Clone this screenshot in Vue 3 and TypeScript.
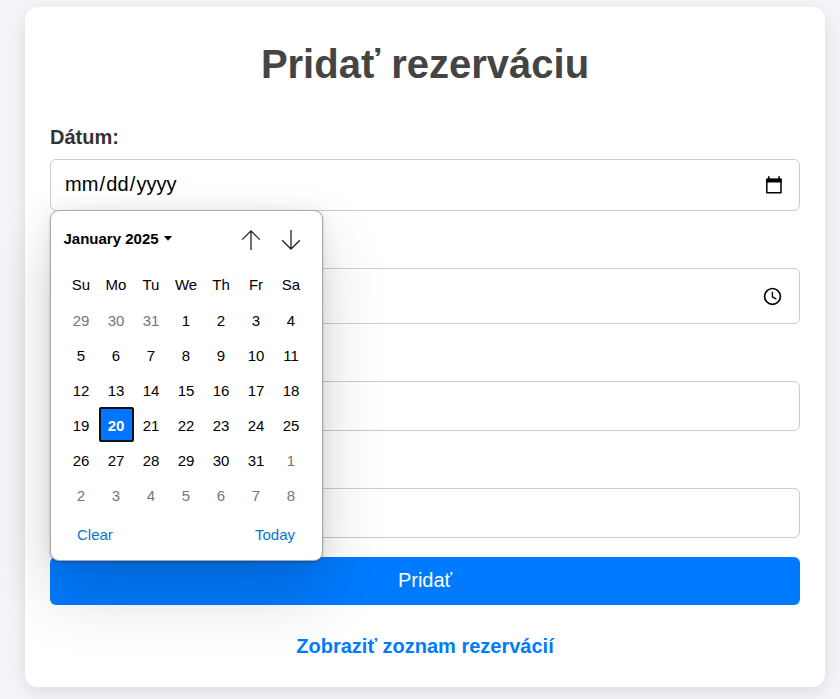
<script setup lang="ts">
interface Day {
  label: number
  muted: boolean
  selected: boolean
}

const weekdays: string[] = ['Su', 'Mo', 'Tu', 'We', 'Th', 'Fr', 'Sa']

// Six weeks, starting on Sunday 29 December 2024
const days: Day[] = Array.from({ length: 42 }, (_, i) => {
  const date = new Date(2024, 11, 29 + i)
  const inMonth = date.getMonth() === 0
  return {
    label: date.getDate(),
    muted: !inMonth,
    selected: inMonth && date.getDate() === 20,
  }
})
</script>

<template>
  <div class="page">
    <main class="card">
      <h1 class="title">Pridať rezerváciu</h1>

      <form class="form" @submit.prevent>
        <label class="label">Dátum:</label>
        <div class="field date">
          <span class="value"><i>mm</i><i>/</i><i>dd</i><i>/</i><i>yyyy</i></span>
          <svg class="icon" width="20" height="20" viewBox="0 0 20 20">
            <path d="M2.8 4.4h14.2v13.4H2.8z" fill="none" stroke="#000" stroke-width="1.5" stroke-linejoin="round" />
            <path d="M2.1 3.4h15.6v4H2.1zM4 1.2h1.6v2.4H4zM14.3 1.2h1.6v2.4h-1.6z" fill="#000" />
          </svg>

          <div class="popup">
            <div class="popup-head">
              <span class="month">January 2025</span>
              <svg class="caret" width="8" height="5" viewBox="0 0 8 5"><path d="M0 0h8L4 4.8z" /></svg>
              <svg class="arrow" width="20" height="22" viewBox="0 0 20 22">
                <path d="M10 21V1.8M1.2 10.6L10 1.8l8.8 8.8" />
              </svg>
              <svg class="arrow" width="20" height="22" viewBox="0 0 20 22">
                <path d="M10 1v19M1.2 11.2l8.8 8.8 8.8-8.8" />
              </svg>
            </div>
            <div class="grid weekdays">
              <span v-for="name in weekdays" :key="name" class="cell">{{ name }}</span>
            </div>
            <div class="grid">
              <span
                v-for="(day, i) in days"
                :key="i"
                class="cell"
                :class="{ muted: day.muted, selected: day.selected }"
              >{{ day.label }}</span>
            </div>
            <div class="popup-foot">
              <span>Clear</span>
              <span>Today</span>
            </div>
          </div>
        </div>

        <div class="field time">
          <svg class="icon clock" width="20" height="20" viewBox="0 0 20 20">
            <circle cx="9.5" cy="10.4" r="7.9" fill="none" stroke="#000" stroke-width="1.7" />
            <path d="M9.4 5.8v5l4 2.4" fill="none" stroke="#000" stroke-width="1.4" />
          </svg>
        </div>
        <div class="field text"></div>
        <div class="field text last"></div>
        <button class="submit" type="submit">Pridať</button>
      </form>

      <a class="link">Zobraziť zoznam rezervácií</a>
    </main>
  </div>
</template>

<style>
body {
  background: #f4f4f9;
}
</style>

<style scoped>
.page {
  box-sizing: border-box;
  height: 699px;
  padding: 7px 0 0 25px;
  overflow: hidden;
  background: #f4f4f9;
}
.card {
  box-sizing: border-box;
  width: 800px;
  height: 680px;
  padding: 34px 25px 0;
  display: flex;
  flex-direction: column;
  background: #fff;
  border-radius: 12.5px;
  box-shadow: 0 5px 19px rgba(0, 0, 0, 0.1);
  color: #333;
  font-family: "Liberation Sans", Arial, sans-serif;
  font-size: 20px;
}
.title {
  margin: 0;
  text-align: center;
  font-size: 40px;
  line-height: 46px;
  color: #444;
}
.form {
  display: flex;
  flex-direction: column;
  margin-top: 39px;
}
.label {
  font-weight: bold;
  line-height: 23px;
  height: 23px;
}
.field {
  box-sizing: border-box;
  display: flex;
  align-items: center;
  justify-content: space-between;
  padding: 0 15px 0 13px;
  border: 1px solid #ccc;
  border-radius: 6px;
  background: #fff;
}
.date {
  position: relative;
  height: 52px;
  margin-top: 10px;
  color: #000;
}
.value {
  display: flex;
  line-height: 23px;
  margin-bottom: 1px;
}
.value i {
  font-style: normal;
  padding: 0 1px;
}
.value i:nth-child(even) {
  padding: 0 0.2px;
}
.time {
  height: 56px;
  margin-top: 57px;
  justify-content: flex-end;
  padding-right: 16px;
}
.text {
  height: 50px;
  margin-top: 57px;
}
.submit {
  height: 48px;
  margin-top: 19px;
  padding: 0 0 2px;
  border: 0;
  border-radius: 6px;
  background: #007bff;
  color: #fff;
  font: inherit;
}
.link {
  margin-top: 30px;
  line-height: 23px;
  text-align: center;
  font-weight: bold;
  color: #007bff;
}
.popup {
  position: absolute;
  z-index: 1;
  top: 50px;
  left: -1px;
  box-sizing: border-box;
  width: 272.5px;
  height: 351px;
  border: 1px solid #aaa;
  border-radius: 9px;
  background: #fff;
  box-shadow: 0 1px 2px rgba(0, 0, 0, 0.25), 0 0 20px rgba(0, 0, 0, 0.08), 0 32px 64px rgba(0, 0, 0, 0.17);
  font-size: 15px;
}
.popup-head {
  display: flex;
  align-items: center;
  height: 56px;
  padding: 0 20.5px 0 12.5px;
}
.month {
  margin-top: -2px;
  font-weight: bold;
}
.caret {
  margin: -2px auto 0 5px;
}
.arrow {
  margin: 2px 0 0 20px;
  fill: none;
  stroke: #222;
  stroke-width: 1.3;
}
.grid {
  display: grid;
  grid-template-columns: repeat(7, 35px);
  grid-auto-rows: 35px;
  margin-left: 12.5px;
}
.cell {
  box-sizing: border-box;
  display: flex;
  align-items: center;
  justify-content: center;
  padding-top: 1px;
}
.weekdays .cell {
  padding-top: 0;
}
.muted {
  color: #767676;
}
.selected {
  border: 2px solid #101010;
  border-radius: 2px;
  background: #0075ff;
  color: #fff;
  font-weight: bold;
}
.popup-foot {
  display: flex;
  justify-content: space-between;
  padding: 14px 26.5px 0 26px;
  line-height: 18px;
  color: #0078d4;
}
</style>
